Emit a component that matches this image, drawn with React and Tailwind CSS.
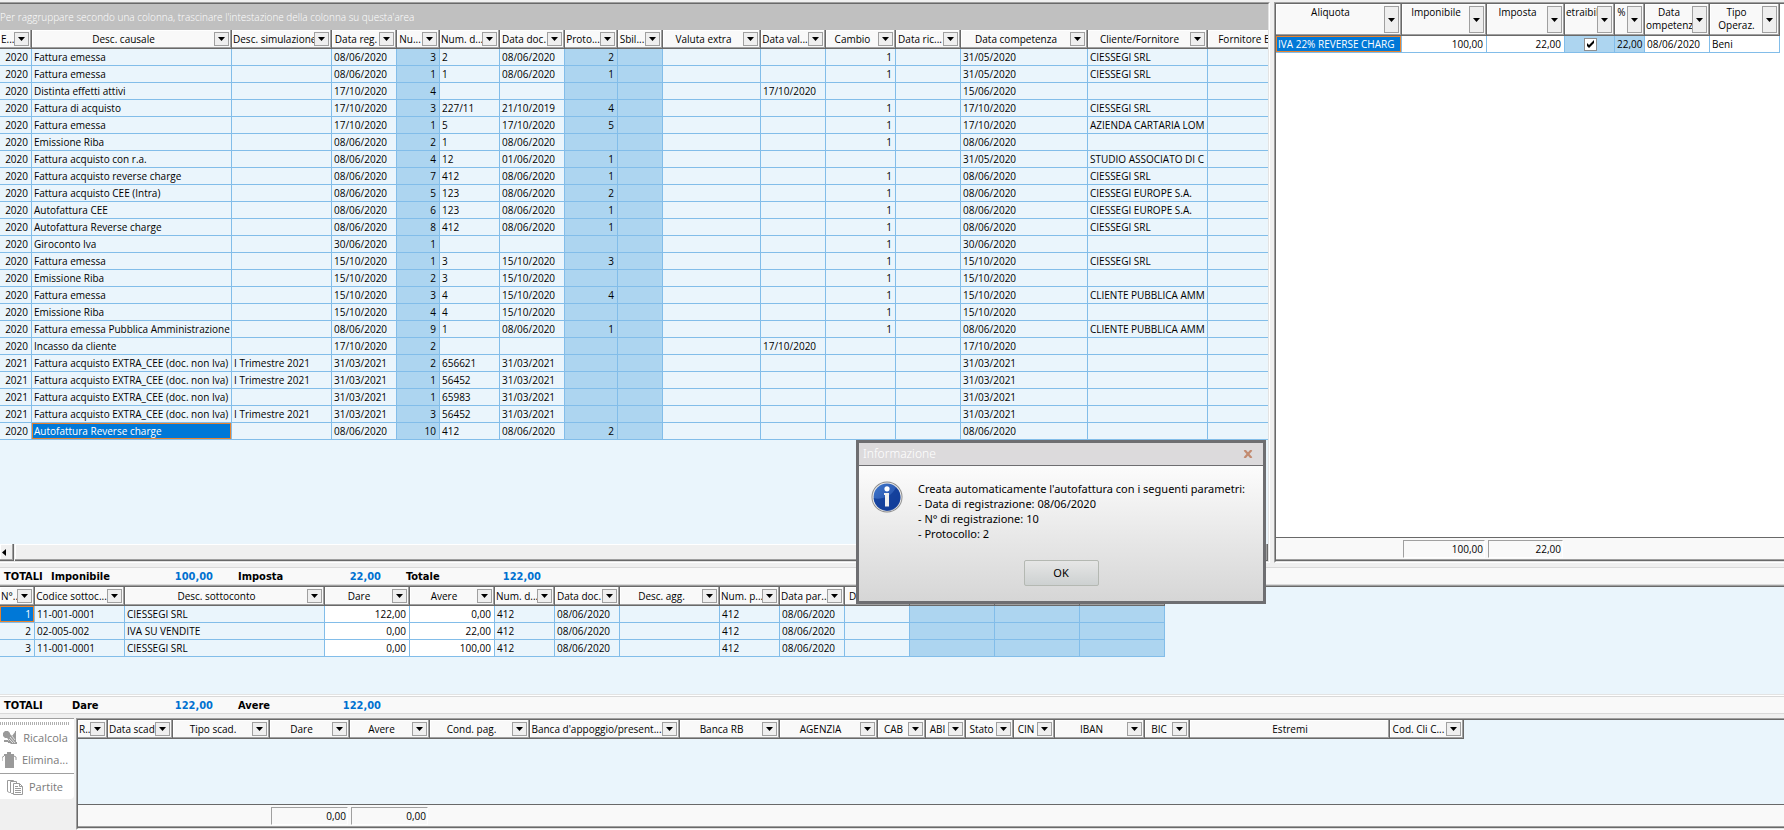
import clsx from "clsx";

const headEdge = "border-r border-b border-[#696969] shadow-[inset_-1px_-1px_0_#a0a0a0,inset_1px_1px_0_#ffffff]";
const sunkenOuter = "border border-t-[#a0a0a0] border-l-[#a0a0a0] border-r-white border-b-white";
const sunkenInner = "border border-t-[#696969] border-l-[#696969] border-r-[#e3e3e3] border-b-[#e3e3e3]";

const entryColumns = [
    { label: "E...", width: "w-[32px]", align: "right" },
    { label: "Desc. causale", width: "w-[200px]" },
    { label: "Desc. simulazione", width: "w-[100px]" },
    { label: "Data reg.", width: "w-[65px]" },
    { label: "Nu...", width: "w-[43px]", align: "right", tone: "dark" },
    { label: "Num. d...", width: "w-[60px]" },
    { label: "Data doc.", width: "w-[65px]" },
    { label: "Proto...", width: "w-[53px]", align: "right", tone: "dark" },
    { label: "Sbil...", width: "w-[45px]", tone: "dark" },
    { label: "Valuta extra", width: "w-[98px]" },
    { label: "Data val...", width: "w-[65px]" },
    { label: "Cambio", width: "w-[70px]", align: "right" },
    { label: "Data ric...", width: "w-[65px]" },
    { label: "Data competenza", width: "w-[127px]" },
    { label: "Cliente/Fornitore", width: "w-[120px]" },
    { label: "Fornitore Ex", width: "w-[94px]" }
];

const extraCee = "Fattura acquisto EXTRA_CEE (doc. non Iva)";

// anno, causale, simulazione, data reg., numero, num. doc., data doc., protocollo, data valuta, cambio, competenza, cliente
const entries = [
    ["2020", "Fattura emessa", "", "08/06/2020", "3", "2", "08/06/2020", "2", "", "1", "31/05/2020", "CIESSEGI SRL"],
    ["2020", "Fattura emessa", "", "08/06/2020", "1", "1", "08/06/2020", "1", "", "1", "31/05/2020", "CIESSEGI SRL"],
    ["2020", "Distinta effetti attivi", "", "17/10/2020", "4", "", "", "", "17/10/2020", "", "15/06/2020", ""],
    ["2020", "Fattura di acquisto", "", "17/10/2020", "3", "227/11", "21/10/2019", "4", "", "1", "17/10/2020", "CIESSEGI SRL"],
    ["2020", "Fattura emessa", "", "17/10/2020", "1", "5", "17/10/2020", "5", "", "1", "17/10/2020", "AZIENDA CARTARIA LOM"],
    ["2020", "Emissione Riba", "", "08/06/2020", "2", "1", "08/06/2020", "", "", "1", "08/06/2020", ""],
    ["2020", "Fattura acquisto con r.a.", "", "08/06/2020", "4", "12", "01/06/2020", "1", "", "", "31/05/2020", "STUDIO ASSOCIATO DI C"],
    ["2020", "Fattura acquisto reverse charge", "", "08/06/2020", "7", "412", "08/06/2020", "1", "", "1", "08/06/2020", "CIESSEGI SRL"],
    ["2020", "Fattura acquisto CEE (Intra)", "", "08/06/2020", "5", "123", "08/06/2020", "2", "", "1", "08/06/2020", "CIESSEGI EUROPE S.A."],
    ["2020", "Autofattura CEE", "", "08/06/2020", "6", "123", "08/06/2020", "1", "", "1", "08/06/2020", "CIESSEGI EUROPE S.A."],
    ["2020", "Autofattura Reverse charge", "", "08/06/2020", "8", "412", "08/06/2020", "1", "", "1", "08/06/2020", "CIESSEGI SRL"],
    ["2020", "Giroconto Iva", "", "30/06/2020", "1", "", "", "", "", "1", "30/06/2020", ""],
    ["2020", "Fattura emessa", "", "15/10/2020", "1", "3", "15/10/2020", "3", "", "1", "15/10/2020", "CIESSEGI SRL"],
    ["2020", "Emissione Riba", "", "15/10/2020", "2", "3", "15/10/2020", "", "", "1", "15/10/2020", ""],
    ["2020", "Fattura emessa", "", "15/10/2020", "3", "4", "15/10/2020", "4", "", "1", "15/10/2020", "CLIENTE PUBBLICA AMM"],
    ["2020", "Emissione Riba", "", "15/10/2020", "4", "4", "15/10/2020", "", "", "1", "15/10/2020", ""],
    ["2020", "Fattura emessa Pubblica Amministrazione", "", "08/06/2020", "9", "1", "08/06/2020", "1", "", "1", "08/06/2020", "CLIENTE PUBBLICA AMM"],
    ["2020", "Incasso da cliente", "", "17/10/2020", "2", "", "", "", "17/10/2020", "", "17/10/2020", ""],
    ["2021", extraCee, "I Trimestre 2021", "31/03/2021", "2", "656621", "31/03/2021", "", "", "", "31/03/2021", ""],
    ["2021", extraCee, "I Trimestre 2021", "31/03/2021", "1", "56452", "31/03/2021", "", "", "", "31/03/2021", ""],
    ["2021", extraCee, "", "31/03/2021", "1", "65983", "31/03/2021", "", "", "", "31/03/2021", ""],
    ["2021", extraCee, "I Trimestre 2021", "31/03/2021", "3", "56452", "31/03/2021", "", "", "", "31/03/2021", ""],
    ["2020", "Autofattura Reverse charge", "", "08/06/2020", "10", "412", "08/06/2020", "2", "", "", "08/06/2020", ""]
];

const entryRows = entries.map(e => [...e.slice(0, 8), "", "", e[8], e[9], "", e[10], e[11], ""]);

const lineColumns = [
    { label: "N°...", width: "w-[35px]", align: "right" },
    { label: "Codice sottoc...", width: "w-[90px]" },
    { label: "Desc. sottoconto", width: "w-[200px]" },
    { label: "Dare", width: "w-[85px]", align: "right", tone: "white" },
    { label: "Avere", width: "w-[85px]", align: "right", tone: "white" },
    { label: "Num. d...", width: "w-[60px]" },
    { label: "Data doc.", width: "w-[65px]" },
    { label: "Desc. agg.", width: "w-[100px]" },
    { label: "Num. p...", width: "w-[60px]" },
    { label: "Data par...", width: "w-[65px]" },
    { label: "D", width: "w-[65px]", labelAlign: "left" },
    { label: "", width: "w-[85px]", tone: "dark" },
    { label: "", width: "w-[85px]", tone: "dark" },
    { label: "", width: "w-[85px]", tone: "dark" }
];

const lineRows = [
    ["1", "11-001-0001", "CIESSEGI SRL", "122,00", "0,00", "412", "08/06/2020", "", "412", "08/06/2020", "", "", "", ""],
    ["2", "02-005-002", "IVA SU VENDITE", "0,00", "22,00", "412", "08/06/2020", "", "412", "08/06/2020", "", "", "", ""],
    ["3", "11-001-0001", "CIESSEGI SRL", "0,00", "100,00", "412", "08/06/2020", "", "412", "08/06/2020", "", "", "", ""]
];

const dueColumns = [
    { label: "R...", width: "w-[30px]" },
    { label: "Data scad.", width: "w-[65px]" },
    { label: "Tipo scad.", width: "w-[97px]" },
    { label: "Dare", width: "w-[80px]" },
    { label: "Avere", width: "w-[80px]" },
    { label: "Cond. pag.", width: "w-[100px]" },
    { label: "Banca d'appoggio/present...", width: "w-[150px]" },
    { label: "Banca RB", width: "w-[100px]" },
    { label: "AGENZIA", width: "w-[98px]" },
    { label: "CAB", width: "w-[48px]" },
    { label: "ABI", width: "w-[40px]" },
    { label: "Stato", width: "w-[48px]" },
    { label: "CIN", width: "w-[41px]" },
    { label: "IBAN", width: "w-[90px]" },
    { label: "BIC", width: "w-[45px]" },
    { label: "Estremi", width: "w-[200px]", noFilter: true },
    { label: "Cod. Cli C...", width: "w-[74px]" }
];

const vatColumns = [
    { label: "Aliquota", width: "w-[126px]" },
    { label: "Imponibile", width: "w-[85px]", align: "right", tone: "white" },
    { label: "Imposta", width: "w-[78px]", align: "right", tone: "white" },
    { label: "etraibil", width: "w-[50px]", align: "center", tone: "dark" },
    { label: "%", width: "w-[30px]", align: "right", tone: "dark" },
    { label: "Data ompetenz", width: "w-[65px]", tone: "white" },
    { label: "Tipo Operaz.", width: "w-[70px]", tone: "white" }
];

const vatRows = [["IVA 22% REVERSE CHARG", "100,00", "22,00", <CheckBox key="detraibile" />, "22,00", "08/06/2020", "Beni"]];

function CheckBox() {
    return (
        <span className="relative block mx-auto size-[13px]">
            <input type="checkbox" defaultChecked aria-label="Detraibile" className="block appearance-none size-[13px] border border-[#8f8f8f] bg-white" />
            <svg viewBox="0 0 13 13" className="pointer-events-none absolute inset-0 size-[13px]" aria-hidden="true">
                <path d="M3 5v3l2 2 5-5V2L5 7z" fill="#000" />
            </svg>
        </span>
    );
}

function FilterButton({ label, tall }) {
    return (
        <button type="button" aria-label={`Filtra ${label}`} className={clsx("flex shrink-0 items-center justify-center w-[15px] mr-[2px] border border-[#a0a0a0] bg-[#efefef]", tall ? "h-[27px]" : "h-[14px]")}>
            <svg viewBox="0 0 7 4" width="7" height="4" aria-hidden="true"><path d="M0 0h7L3.500 4z" fill="#000" /></svg>
        </button>
    );
}

function Grid({ label, columns, rows, selected, tallHead }) {
    return (
        <table aria-label={label} className="table-fixed w-0 border-separate border-spacing-0">
            <colgroup>
                {columns.map((c, i) => <col key={i} className={c.width} />)}
            </colgroup>
            <thead>
                <tr>
                    {columns.map((c, i) =>
                        <th key={i} scope="col" className={clsx("p-0 bg-[#f9f9f9] font-normal", headEdge, tallHead ? "h-[32px]" : "h-[19px]")}>
                            <div className={clsx("flex overflow-hidden", tallHead ? "h-[31px] items-start pt-[2px]" : "h-[18px] items-center")}>
                                <span className={clsx("min-w-0 flex-1 overflow-hidden", c.labelAlign === "left" ? "text-left pl-1" : "text-center pl-px", tallHead ? "leading-[13px]" : "leading-[16px] whitespace-nowrap")}>{c.label}</span>
                                {c.label && !c.noFilter && <FilterButton label={c.label} tall={tallHead} />}
                            </div>
                        </th>
                    )}
                </tr>
            </thead>
            {rows &&
                <tbody>
                    {rows.map((row, r) =>
                        <tr key={r}>
                            {row.map((value, i) =>
                                <td
                                    key={i}
                                    className={clsx(
                                        "h-[17px] p-0 pl-[2px] leading-[16px] overflow-hidden whitespace-nowrap border-r border-b border-[#82bde9]",
                                        columns[i].align === "right" && "text-right pr-[3px]",
                                        selected?.[0] === r && selected?.[1] === i
                                            ? "bg-[#0078d7] text-white shadow-[inset_0_0_0_1px_#e8832f]"
                                            : columns[i].tone === "dark" ? "bg-[#add5f0]" : columns[i].tone === "white" ? "bg-white" : "bg-[#eaf5fc]"
                                    )}
                                >
                                    {value}
                                </td>
                            )}
                        </tr>
                    )}
                </tbody>
            }
        </table>
    );
}

function Panel({ className, children }) {
    return (
        <div className={clsx("flex min-w-0", sunkenOuter, className)}>
            <div className={clsx("flex min-w-0 flex-1 flex-col overflow-hidden", sunkenInner)}>
                {children}
            </div>
        </div>
    );
}

function GridFooter({ children }) {
    return (
        <div className="flex h-[24px] border-t border-t-[#696969] border-b border-b-[#696969] bg-[#f9f9f9] pt-[2px] shadow-[inset_0_-1px_0_#a0a0a0]">
            {children}
        </div>
    );
}

function FooterCell({ width, children }) {
    return (
        <div className={clsx("h-[18px] ml-px mr-[2px] border border-t-[#a0a0a0] border-l-[#a0a0a0] border-r-white border-b-white pr-px text-right leading-[16px]", width)}>
            {children}
        </div>
    );
}

function TotalsBar({ titleWidth, items }) {
    return (
        <div className="flex h-[18px] border-y border-[#d9d9d9] bg-[#f9f9f9] pl-1 font-['DejaVu_Sans_Condensed','DejaVu_Sans',sans-serif] text-[11px] font-bold leading-[18px]">
            <span className={titleWidth}>TOTALI</span>
            {items.map(([label, value, width]) =>
                <div key={label} className="flex pr-[25px]">
                    <span className="w-[80px]">{label}</span>
                    <span className={clsx("text-right text-[#0070d0]", width)}>{value}</span>
                </div>
            )}
        </div>
    );
}

function ToolButton({ icon, children }) {
    return (
        <button type="button" className="flex h-[22px] items-center justify-center gap-[5px] pr-1 text-[11px] text-[#7a7a7a]">
            {icon}
            {children}
        </button>
    );
}

const recalcIcon = (
    <svg width="16" height="16" viewBox="0 0 16 16" fill="#9a9a9a" aria-hidden="true">
        <path d="M1 3l2-2h3l2 2v1l2 2 3-4V1h1v11h1v2H9l-2-2-1-3-1-1H3L1 6z" />
        <path d="M2 10h4v1h2v2H6v-1H2z" />
        <path d="M8 7l5 6M7 9l4 4M10 6l3 4" stroke="#fff" strokeWidth=".7" />
    </svg>
);

const trashIcon = (
    <svg width="15" height="17" viewBox="0 0 15 17" fill="#9a9a9a" aria-hidden="true">
        <path d="M5 0h4v2h3v2H2V2h3zM3 4h9v12H3z" />
        <path d="M2 4L0 5.500V9M12 4l2 1v3" stroke="#9a9a9a" fill="none" />
    </svg>
);

const sheetsIcon = (
    <svg width="17" height="17" viewBox="0 0 17 17" fill="#fff" stroke="#9a9a9a" aria-hidden="true">
        <path d="M.5 1.500h6v11l-4 1-2-1z" />
        <path d="M3.500 2.500h6v12h-5l-1-1z" />
        <path d="M6.500 4.500h6l3 3v8h-9z" />
        <path d="M12.500 4.500v3h3M8 7.500h3M8 9.500h6M8 11.500h6M8 13.500h6" fill="none" />
    </svg>
);

function InfoIcon() {
    return (
        <svg width="32" height="32" viewBox="0 0 32 32" className="shrink-0" aria-hidden="true">
            <defs>
                <linearGradient id="info-blue" x1="0" y1="0" x2="1" y2="1">
                    <stop offset="0" stopColor="#3f78cc" />
                    <stop offset="1" stopColor="#1b3f9c" />
                </linearGradient>
            </defs>
            <circle cx="16" cy="16" r="15.500" fill="#8b8b8b" />
            <circle cx="16" cy="16" r="14.600" fill="#e8e8e8" />
            <circle cx="16" cy="16" r="13.400" fill="url(#info-blue)" />
            <path d="M2.700 17C8 19 20 17 25 6.500A13.400 13.400 0 1 1 2.700 17z" fill="#0d3a96" opacity=".75" />
            <circle cx="16" cy="7.800" r="2.600" fill="#fff" />
            <path d="M13 12h5v13.500h-4V14h-1z" fill="#f0f0f0" />
        </svg>
    );
}

function InfoDialog() {
    return (
        <div role="dialog" aria-labelledby="dialog-title" className="absolute left-[856px] top-[440px] flex w-[410px] h-[164px] flex-col border-3 border-[#6e6e71] font-['Noto_Sans',sans-serif] text-[11px]">
            <div className="flex h-[23px] shrink-0 items-center justify-between border-b border-[#6e6e71] bg-[#dcdadc] pl-1 pr-[10px]">
                <h2 id="dialog-title" className="text-xs font-light text-white">Informazione</h2>
                <button type="button" aria-label="Chiudi">
                    <svg width="10" height="8" viewBox="0 0 10 8" aria-hidden="true"><path d="M1.500 0L8.500 8M8.500 0L1.500 8" stroke="#c28a70" strokeWidth="2.200" /></svg>
                </button>
            </div>
            <div className="flex flex-1 flex-col items-center bg-linear-to-b from-[#fcfcfc] to-[#d6d6d6] pt-[15px]">
                <div className="flex w-full gap-[15px] pl-3">
                    <InfoIcon />
                    <p className="whitespace-nowrap leading-[15px]">
                        Creata automaticamente l'autofattura con i seguenti parametri:<br />
                        - Data di registrazione: 08/06/2020<br />
                        - N° di registrazione: 10<br />
                        - Protocollo: 2
                    </p>
                </div>
                <button type="button" className="mt-[19px] h-[26px] w-[75px] rounded-xs border border-[#b4b8b2] bg-linear-to-b from-[#e6e6e6] to-[#cdd1d1]">OK</button>
            </div>
        </div>
    );
}

export default function App() {
    return (
        <div className="relative flex min-h-screen flex-col overflow-hidden bg-[#f0f0f0] pt-[2px] font-['Open_Sans',sans-serif] text-[10px] text-black">
            <main className="flex h-[561px] gap-1">
                <Panel className="flex-1 border-l-0 [&>div]:border-l-0">
                    <p className="h-[26px] shrink-0 bg-[#c0c0c0] font-light leading-[26px] text-white">Per raggruppare secondo una colonna, trascinare l'intestazione della colonna su questa'area</p>
                    <div className="flex-1 overflow-hidden bg-[#eaf5fc]">
                        <Grid label="Registrazioni" columns={entryColumns} rows={entryRows} selected={[22, 1]} />
                    </div>
                    <div className="flex h-[17px] shrink-0 bg-[#f0f0f0]">
                        <button type="button" aria-label="Scorri a sinistra" className={clsx("flex w-[14px] items-center pl-[2px]", headEdge)}>
                            <svg width="4" height="7" viewBox="0 0 4 7" aria-hidden="true"><path d="M4 0v7L0 3.500z" /></svg>
                        </button>
                        <div className={clsx("ml-px flex-1", headEdge)} />
                    </div>
                </Panel>
                <Panel className="w-[510px] shrink-0 border-r-0 [&>div]:border-r-0">
                    <div className="flex-1 bg-white">
                        <Grid label="Riepilogo Iva" columns={vatColumns} rows={vatRows} selected={[0, 0]} tallHead />
                    </div>
                    <GridFooter>
                        <div className="w-[126px]" />
                        <FooterCell width="w-[82px]">100,00</FooterCell>
                        <FooterCell width="w-[75px]">22,00</FooterCell>
                    </GridFooter>
                </Panel>
            </main>

            <section className="mt-1">
                <TotalsBar titleWidth="w-[47px]" items={[["Imponibile", "100,00", "w-[82px]"], ["Imposta", "22,00", "w-[63px]"], ["Totale", "122,00", "w-[55px]"]]} />
                <Panel className="h-[111px] border-x-0 [&>div]:border-x-0">
                    <div className="flex-1 bg-[#eaf5fc]">
                        <Grid label="Sottoconti" columns={lineColumns} rows={lineRows} selected={[0, 0]} />
                    </div>
                </Panel>
                <TotalsBar titleWidth="w-[68px]" items={[["Dare", "122,00", "w-[61px]"], ["Avere", "122,00", "w-[63px]"]]} />
            </section>

            <section className="mt-1 flex flex-1">
                <div className="w-[76px] shrink-0">
                    <div className="flex h-[81px] w-[74px] flex-col rounded-br border-t border-[#a0a0a0] bg-white pt-[3px]">
                        <div className="mr-1 h-[3px] bg-[repeating-linear-gradient(90deg,#b0b0b0_0_1px,#ffffff_1px_2px)]" />
                        <div className="mt-[2px] flex flex-col">
                            <ToolButton icon={recalcIcon}>Ricalcola</ToolButton>
                            <ToolButton icon={trashIcon}>Elimina...</ToolButton>
                        </div>
                        <hr className="my-[2px] border-[#a0a0a0]" />
                        <ToolButton icon={sheetsIcon}>Partite</ToolButton>
                    </div>
                </div>
                <Panel className="flex-1 border-r-0 [&>div]:border-r-0">
                    <div className="flex-1 bg-[#eaf5fc]">
                        <Grid label="Scadenze" columns={dueColumns} />
                    </div>
                    <GridFooter>
                        <div className="w-[192px]" />
                        <FooterCell width="w-[77px]">0,00</FooterCell>
                        <FooterCell width="w-[77px]">0,00</FooterCell>
                    </GridFooter>
                </Panel>
            </section>

            <InfoDialog />
        </div>
    );
}
